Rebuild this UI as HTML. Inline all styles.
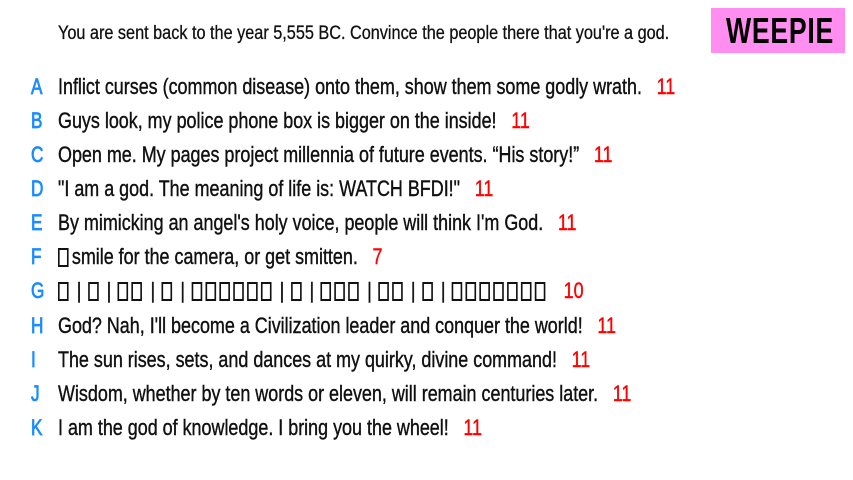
<!DOCTYPE html>
<html><head><meta charset="utf-8"><style>
html,body{margin:0;padding:0;background:#fff;width:853px;height:480px;overflow:hidden}
body{font-family:"Liberation Sans",sans-serif;color:#111;position:relative}
.q{position:absolute;left:58px;top:21px;font-size:19px;line-height:26px;white-space:nowrap;transform:scaleX(0.855);transform-origin:0 0;-webkit-text-stroke:0.3px #111}
.t{position:absolute;left:711px;top:8px;width:134px;height:45px;background:#ff8ef0;overflow:hidden}
.t span{position:absolute;left:15px;top:0;line-height:46px;font-size:36px;font-weight:bold;color:#000;transform:scaleX(0.74);transform-origin:0 0;white-space:nowrap;letter-spacing:1px}
.r{position:absolute;left:0;height:30px;line-height:30px;font-size:22px;white-space:nowrap}
.l{position:absolute;left:31px;color:#1a8cff;font-size:22px;transform:scaleX(0.78);transform-origin:0 0;-webkit-text-stroke:0.8px #1a8cff}
.x{position:absolute;left:58px;transform:scaleX(0.815);transform-origin:0 0;-webkit-text-stroke:0.4px #111}
.n{color:#f00;margin-left:18px;-webkit-text-stroke:0.4px #f00}
.b{display:inline-block;width:13px;height:19px;border:2px solid #111;box-sizing:border-box;vertical-align:-3px;margin-right:4px}
.g .s{margin:0 8px 0 6px}
</style></head><body>
<div class="q">You are sent back to the year 5,555 BC. Convince the people there that you're a god.</div>
<div class="t"><span>WEEPIE</span></div>
<div class="r" style="top:72px"><span class="l">A</span><span class="x">Inflict curses (common disease) onto them, show them some godly wrath.<span class="n">11</span></span></div>
<div class="r" style="top:106px"><span class="l">B</span><span class="x">Guys look, my police phone box is bigger on the inside!<span class="n">11</span></span></div>
<div class="r" style="top:140px"><span class="l">C</span><span class="x">Open me. My pages project millennia of future events. “His story!”<span class="n">11</span></span></div>
<div class="r" style="top:174px"><span class="l">D</span><span class="x">"I am a god. The meaning of life is: WATCH BFDI!"<span class="n">11</span></span></div>
<div class="r" style="top:208px"><span class="l">E</span><span class="x">By mimicking an angel's holy voice, people will think I'm God.<span class="n">11</span></span></div>
<div class="r" style="top:242px"><span class="l">F</span><span class="x"><span class="b"></span>smile for the camera, or get smitten.<span class="n">7</span></span></div>
<div class="r g" style="top:276px"><span class="l">G</span><span class="x"><span class="b"></span><span class="s">|</span><span class="b"></span><span class="s">|</span><span class="b"></span><span class="b"></span><span class="s">|</span><span class="b"></span><span class="s">|</span><span class="b"></span><span class="b"></span><span class="b"></span><span class="b"></span><span class="b"></span><span class="b"></span><span class="s">|</span><span class="b"></span><span class="s">|</span><span class="b"></span><span class="b"></span><span class="b"></span><span class="s">|</span><span class="b"></span><span class="b"></span><span class="s">|</span><span class="b"></span><span class="s">|</span><span class="b"></span><span class="b"></span><span class="b"></span><span class="b"></span><span class="b"></span><span class="b"></span><span class="b"></span><span class="n">10</span></span></div>
<div class="r" style="top:311px"><span class="l">H</span><span class="x">God? Nah, I'll become a Civilization leader and conquer the world!<span class="n">11</span></span></div>
<div class="r" style="top:345px"><span class="l">I</span><span class="x">The sun rises, sets, and dances at my quirky, divine command!<span class="n">11</span></span></div>
<div class="r" style="top:379px"><span class="l">J</span><span class="x">Wisdom, whether by ten words or eleven, will remain centuries later.<span class="n">11</span></span></div>
<div class="r" style="top:413px"><span class="l">K</span><span class="x">I am the god of knowledge. I bring you the wheel!<span class="n">11</span></span></div>
</body></html>
